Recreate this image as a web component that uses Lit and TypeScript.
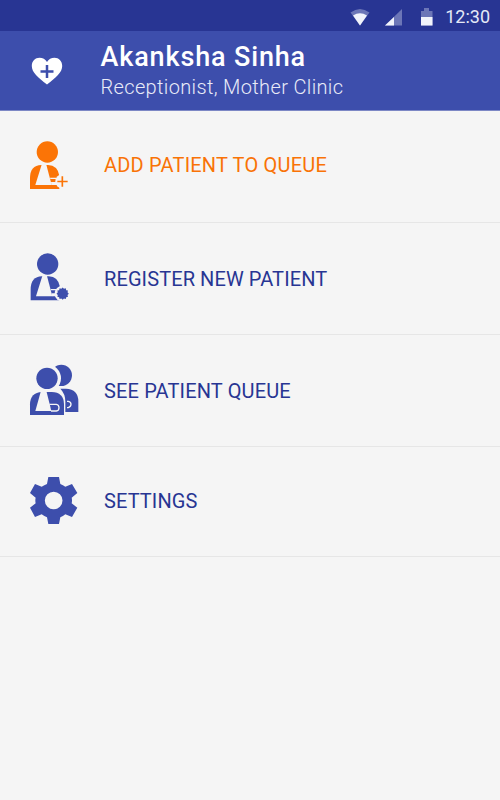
import { LitElement, html, css, svg } from "lit";
import { customElement } from "lit/decorators.js";

const torso = svg`
  <path d="M30 177V145Q30 106 64 105H84Q113 106 118 137V177Z" fill="currentColor"/>
  <path class="paper" d="M65 104H79L95 165H46Z"/>
  <path class="paper" d="M90 143H110V147H91ZM93 156H112V165H94Z"/>`;

const addIcon = html`<svg class="icon add" viewBox="0 0 180 180">${svg`
  <g transform="translate(0 -12)">
    <circle cx="82" cy="66" r="32" fill="currentColor"/>
    ${torso}
    <circle class="paper" cx="128" cy="154" r="22"/>
    <path d="M127 139V170M112 154.500H143" stroke="currentColor" stroke-width="5" fill="none"/>
  </g>`}</svg>`;

const badge = Array.from({ length: 24 }, (_, i) => {
  const a = (i * Math.PI) / 12;
  const r = i % 2 ? 15 : 18.5;
  return `${(128 + r * Math.cos(a)).toFixed(1)},${(149 + r * Math.sin(a)).toFixed(1)}`;
}).join(" ");

const registerIcon = html`<svg class="icon register" viewBox="0 0 180 180">${svg`
  <g transform="translate(0 -15)">
    <circle cx="83" cy="60" r="32" fill="currentColor"/>
    <g transform="translate(2 -8)">${torso}</g>
    <circle class="paper" cx="128" cy="149" r="24"/>
    <polygon points=${badge} fill="currentColor"/>
  </g>`}</svg>`;

const queueIcon = html`<svg class="icon queue" viewBox="0 0 180 180">${svg`
  <g transform="translate(0 -15)">
    <circle cx="124" cy="64" r="32" fill="currentColor"/>
    <circle class="paper" cx="81" cy="73" r="42"/>
    <circle cx="81" cy="73" r="32" fill="currentColor"/>
    <path d="M121 104H138Q175 106 175 142V174H136V143Q136 119 121 104Z" fill="currentColor"/>
    <path d="M141 142H145Q153 144 153 151T145 161H141" stroke="#f5f5f5" stroke-width="4" fill="none"/>
    <path d="M30 183V151Q31 115 66 114H95Q131 115 132 150V183Z" fill="currentColor"/>
    <path class="paper" d="M63 110H79L94 171H46Z"/>
    <path d="M88 151H109Q117 152 117 161T109 171H93" stroke="#f5f5f5" stroke-width="4" fill="none"/>
  </g>`}</svg>`;

const gearIcon = html`<svg class="icon gear" viewBox="0 0 180 180">${svg`
  <path fill="currentColor" fill-rule="evenodd" d="M85 18H117L121 39Q129 42 136 47L156 39L172 66L155 80Q157 88 155 97L172 110L156 138L136 130Q129 136 121 139L117 159H85L81 139Q73 136 65 130L45 138L30 110L47 97Q45 88 47 80L30 66L45 39L65 47Q73 42 81 39ZM101 62A26.500 26.500 0 1 0 101 115A26.500 26.500 0 1 0 101 62Z"/>`}</svg>`;

const items = [
  { label: "ADD PATIENT TO QUEUE", icon: addIcon, kind: "first" },
  { label: "REGISTER NEW PATIENT", icon: registerIcon, kind: "second" },
  { label: "SEE PATIENT QUEUE", icon: queueIcon, kind: "third" },
  { label: "SETTINGS", icon: gearIcon, kind: "fourth" },
];

@customElement("app-root")
export class AppRoot extends LitElement {
  static styles = css`
    :host {
      display: flex;
      flex-direction: column;
      height: 800px;
      background: #f5f5f5;
      font-family: Roboto, "Liberation Sans", sans-serif;
      overflow: hidden;
    }
    svg { display: block; flex: none; }
    .paper { fill: #f5f5f5; }
    .status {
      height: 31px;
      box-sizing: border-box;
      background: #283593;
      color: #e4e8f6;
      display: flex;
      align-items: flex-start;
      justify-content: flex-end;
      padding: 7px 10px 0 0;
    }
    .signals { width: 84px; height: 20px; margin: 1px 11px 0 0; }
    .time { font-size: 18px; line-height: 20px; letter-spacing: 0; white-space: nowrap; }
    header {
      height: 80px;
      box-sizing: border-box;
      background: #3d4eac;
      border-bottom: 1px solid #7d88c5;
      display: flex;
      color: #fff;
      padding: 0 0 0 30px;
    }
    .logo { width: 34px; height: 34px; margin: 23px 36.5px 0 0; }
    .who { padding-top: 10px; white-space: nowrap; }
    .name { font-size: 27px; line-height: 33px; font-weight: 500; letter-spacing: 0.85px; }
    .role { font-size: 20px; line-height: 26px; font-weight: 300; letter-spacing: 0.35px; color: #e9ebf8; }
    .row {
      height: 112px;
      box-sizing: border-box;
      border-bottom: 1px solid #e6e6e6;
      display: flex;
      align-items: flex-start;
      padding: 23px 0 0 20px;
      color: #3d4eac;
    }
    .first { color: #fb7406; }
    .second { padding-top: 26px; }
    .third { padding-top: 24px; }
    .fourth { height: 110px; padding-top: 24px; }
    .icon { width: 60px; height: 60px; }
    .label {
      margin: 18px 0 0 24px;
      font-size: 20px;
      line-height: 24px;
      letter-spacing: 0.1px;
      color: #283593;
      white-space: nowrap;
    }
    .first .label { color: #f97306; margin-top: 19px; letter-spacing: 0.2px; }
    .third .label { margin-top: 20px; letter-spacing: 0.15px; }
  `;

  render() {
    return html`
      <div class="status">
        <svg class="signals" viewBox="0 0 84 20">
          <path d="M0.500 4.500Q10 -2.500 19.500 4.500L10 17.500Z" fill="#6c76b7"/>
          <path d="M3 7.500Q10 3 17 7.500L10 17.500Z" fill="#f1f3fb"/>
          <path d="M35 17.500L52 1V17.500Z" fill="#6c76b7"/>
          <path d="M35 17.500L44 9V17.500Z" fill="#f1f3fb"/>
          <path d="M71 3H74V0H79V3H82.500V17.500H71Z" fill="#6c76b7"/>
          <path d="M71 9H82.500V17.500H71Z" fill="#f1f3fb"/>
        </svg>
        <span class="time">12:30</span>
      </div>
      <header>
        <svg class="logo" viewBox="0 0 34 34">
          <path fill="#fff" d="M17 30.500C8 23.500 1.800 18.500 1.800 12C1.800 7 5.300 3.800 9.500 3.800C12.600 3.800 15.500 5.300 17 8C18.500 5.300 21.400 3.800 24.500 3.800C28.700 3.800 32.200 7 32.200 12C32.200 18.500 26 23.500 17 30.500Z"/>
          <path d="M17 11V24M10.500 17.500H23.500" stroke="#3d4eac" stroke-width="2.500"/>
        </svg>
        <div class="who">
          <div class="name">Akanksha Sinha</div>
          <div class="role">Receptionist, Mother Clinic</div>
        </div>
      </header>
      ${items.map(
        (it) => html`<div class="row ${it.kind}">${it.icon}<span class="label">${it.label}</span></div>`
      )}
    `;
  }
}
